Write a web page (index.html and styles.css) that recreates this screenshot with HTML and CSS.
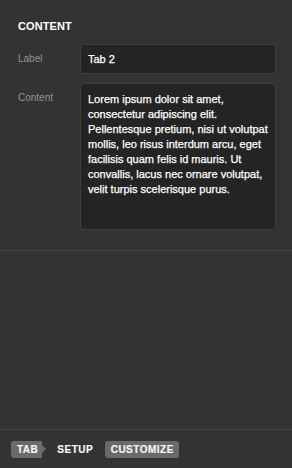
FILE: index.html
```html
<!DOCTYPE html>
<html>
<head>
<meta charset="utf-8">
<link rel="stylesheet" href="styles.css">
</head>
<body>
<div class="panel">
  <section class="section">
    <h2 class="heading">CONTENT</h2>
    <div class="row row-center">
      <label class="label">Label</label>
      <div class="input">Tab 2</div>
    </div>
    <div class="row">
      <label class="label label-top">Content</label>
      <div class="textarea">Lorem ipsum dolor sit amet, consectetur adipiscing elit. Pellentesque pretium, nisi ut volutpat mollis, leo risus interdum arcu, eget facilisis quam felis id mauris. Ut convallis, lacus nec ornare volutpat, velit turpis scelerisque purus.</div>
    </div>
  </section>
  <div class="spacer"></div>
  <nav class="footer">
    <span class="crumb crumb-tab">TAB</span>
    <span class="crumb">SETUP</span>
    <span class="crumb crumb-pill">CUSTOMIZE</span>
  </nav>
</div>
</body>
</html>
```
FILE: styles.css
```css
html, body {
  margin: 0;
  padding: 0;
  background: #333333;
}
body {
  font-family: "Liberation Sans", Arial, sans-serif;
  color: #ffffff;
}
.panel {
  height: 468px;
  display: flex;
  flex-direction: column;
}
.section {
  padding: 20px 16px 20px 18px;
  border-bottom: 1px solid #454545;
}
.heading {
  margin: 0 0 11px 0;
  font-size: 11px;
  line-height: 13px;
  font-weight: bold;
  letter-spacing: 0.1px;
}
.row {
  display: flex;
  align-items: flex-start;
}
.row + .row {
  margin-top: 9px;
}
.row-center {
  align-items: center;
}
.label {
  width: 62px;
  flex: none;
  font-size: 10px;
  line-height: 12px;
  color: #939393;
}
.label-top {
  padding-top: 9px;
}
.input {
  flex: 1;
  height: 28px;
  box-sizing: content-box;
  border: 1px solid #3e3e3e;
  border-radius: 4px;
  background: #242424;
  padding: 0 7px;
  font-size: 11px;
  line-height: 28px;
  -webkit-text-stroke: 0.25px #ffffff;
}
.textarea {
  flex: 1;
  height: 131px;
  border: 1px solid #3e3e3e;
  border-radius: 4px;
  background: #242424;
  padding: 8px 6px 6px 7px;
  font-size: 11px;
  line-height: 15px;
  -webkit-text-stroke: 0.25px #ffffff;
}
.spacer {
  flex: 1;
}
.footer {
  height: 38px;
  border-top: 1px solid #454545;
  display: flex;
  align-items: center;
  gap: 6px;
  padding-left: 11px;
}
.crumb {
  position: relative;
  font-size: 10px;
  font-weight: bold;
  letter-spacing: 0.5px;
  line-height: 17px;
  height: 17px;
  padding: 0 5.5px 0 6px;
  border-radius: 3px;
  color: #f4f4f4;
  -webkit-text-stroke: 0.2px #f4f4f4;
}
.crumb-pill {
  background: #6a6a6a;
}
.crumb-tab {
  background: #6a6a6a;
  border-radius: 3px 0 0 3px;
  margin-right: 3px;
  padding-right: 4px;
}
.crumb-tab::after {
  content: "";
  position: absolute;
  top: 4.5px;
  right: -4px;
  border-style: solid;
  border-width: 4px 0 4px 4px;
  border-color: transparent transparent transparent #6a6a6a;
}
```
